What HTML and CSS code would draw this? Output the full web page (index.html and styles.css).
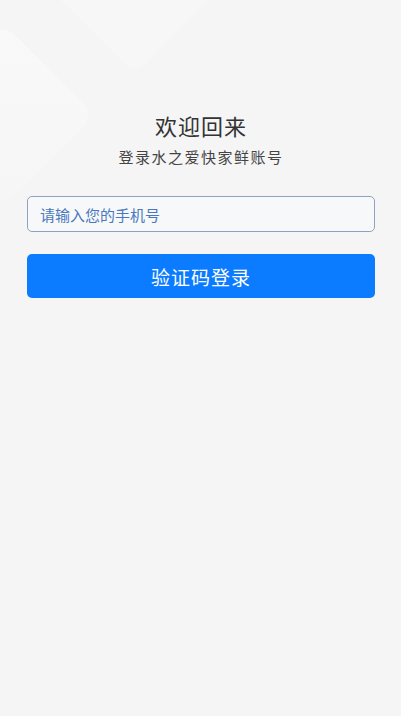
FILE: index.html
```html
<!DOCTYPE html>
<html lang="zh-CN">
<head>
  <meta charset="UTF-8" />
  <title>登录</title>
  <link rel="stylesheet" href="styles.css">
</head>
<body>
  <div class="page">
    <div class="deco deco-left"></div>
    <div class="deco deco-top"></div>

    <div class="login">
      <h1 class="title">欢迎回来</h1>
      <p class="subtitle">登录水之爱快家鲜账号</p>

      <div class="field">
        <input type="tel" class="phone" placeholder="请输入您的手机号" />
      </div>

      <button class="btn-login">验证码登录</button>
    </div>
  </div>
</body>
</html>
```

FILE: styles.css
```css
* {
  box-sizing: border-box;
}

body {
  margin: 0;
  background: #f5f5f6;
  font-family: "Noto Sans CJK SC", "Noto Sans", sans-serif;
  color: #333;
}

.page {
  position: relative;
  min-height: 716px;
  overflow: hidden;
}

/* faint background shapes */
.deco {
  position: absolute;
  border-radius: 16px;
  transform: rotate(45deg);
}

.deco-left {
  width: 130px;
  height: 130px;
  left: -62px;
  top: 50px;
  background: linear-gradient(135deg, #f9f9fa, #f6f6f7);
}

.deco-top {
  width: 120px;
  height: 120px;
  left: 75px;
  top: -70px;
  background: #f7f7f8;
}

.login {
  position: relative;
  padding: 110px 26px 0 27px;
}

.title {
  margin: 0;
  text-align: center;
  font-size: 22px;
  font-weight: normal;
  line-height: 30px;
  color: #333;
  letter-spacing: 1px;
}

.subtitle {
  margin: 7px 0 0;
  text-align: center;
  font-size: 15px;
  line-height: 20px;
  color: #444;
  letter-spacing: 1.5px;
}

.field {
  margin-top: 29px;
}

.phone {
  display: block;
  width: 100%;
  height: 36px;
  padding: 0 12px;
  border: 1px solid #8fa2bf;
  border-radius: 5px;
  background: #f7f8fa;
  font-family: inherit;
  font-size: 15px;
  outline: none;
}

.phone::placeholder {
  color: #4a78bd;
}

.btn-login {
  display: block;
  width: 100%;
  height: 44px;
  margin-top: 22px;
  border: none;
  border-radius: 5px;
  background: #0b7bff;
  color: #fff;
  font-family: inherit;
  font-size: 19px;
  letter-spacing: 1px;
}
```
